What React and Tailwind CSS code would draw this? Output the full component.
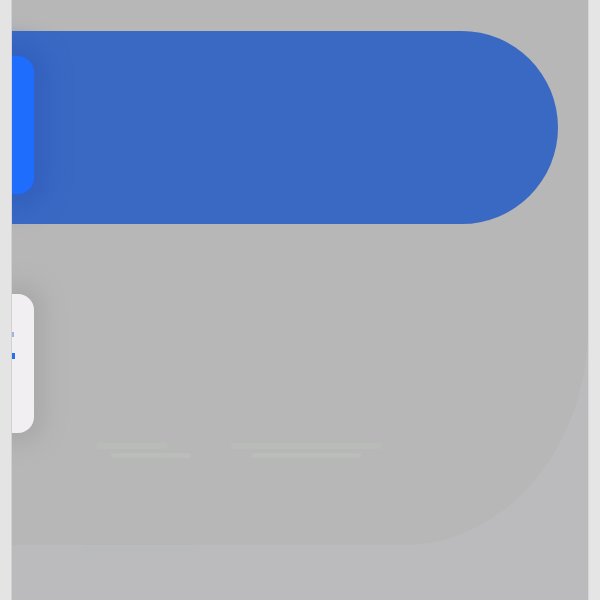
export default function App() {
  return (
    <div className="flex h-[600px] w-[600px] bg-[#e3e3e3] font-['Liberation_Sans',sans-serif]">
      <div className="w-[12px] shrink-0 border-r border-[#d2d2d2] bg-[#e4e4e4]" />
      <main className="relative flex w-[576px] flex-col overflow-hidden bg-[#bbbabc]">
        <section className="flex h-[545px] flex-col rounded-br-[185px_218px] bg-[#b7b7b7] pt-[31px]">
          {/* blue bar */}
          <div className="flex h-[193px] w-[546px] items-start rounded-r-full bg-[#3a69c4] pt-[25px]">
            <div className="h-[138px] w-[22px] rounded-r-2xl bg-[#1f6dfd] shadow-[0_0_20px_16px_rgba(48,92,186,0.6)]" />
          </div>

          {/* white card */}
          <div className="mt-[70px] flex h-[139px] w-[22px] flex-col gap-4 rounded-r-2xl bg-[#f1eff2] pt-[38px] shadow-[0_0_18px_12px_rgba(160,160,160,0.55)]">
            <span className="h-[5px] w-[2px] bg-[#9db3e0]" />
            <span className="h-[6px] w-[3px] bg-[#2a6ff0]" />
          </div>

          {/* faint text lines */}
          <div className="ml-[85px] mt-[10px] flex gap-10 opacity-40">
            <div className="flex flex-col gap-1">
              <span className="h-[6px] w-[70px] rounded bg-[#b9c4b5]" />
              <span className="ml-[14px] h-[5px] w-[80px] rounded bg-[#bfc6bd]" />
            </div>
            <div className="flex flex-col gap-1">
              <span className="h-[6px] w-[150px] rounded bg-[#bac3b8]" />
              <span className="ml-[20px] h-[5px] w-[110px] rounded bg-[#bfc6bd]" />
            </div>
          </div>
        </section>
        <div className="ml-[72px] mt-[2px] h-[4px] w-[110px] rounded bg-[#b6bcc0] opacity-60" />
      </main>
      <div className="w-[12px] shrink-0 border-l border-[#d6d6d6] bg-[#e5e5e5]" />
    </div>
  );
}
